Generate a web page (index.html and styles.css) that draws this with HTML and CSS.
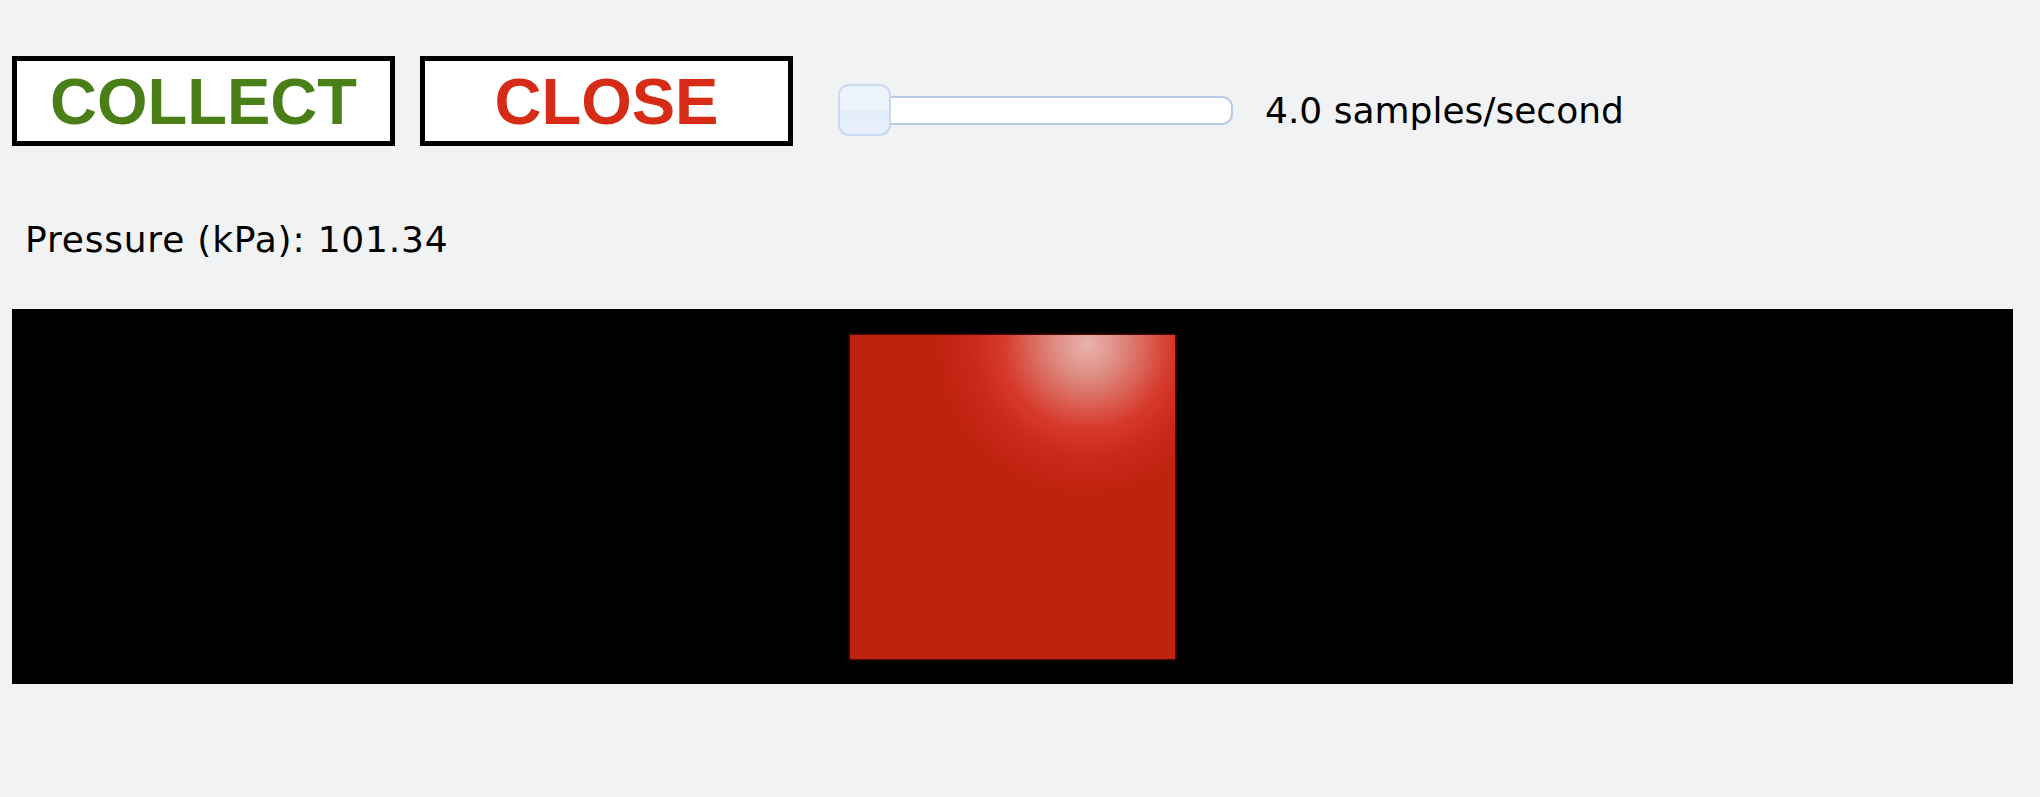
FILE: index.html
```html
<!DOCTYPE html>
<html>
<head>
<meta charset="utf-8">
<title>Pressure sensor</title>
<link rel="stylesheet" href="styles.css">
</head>
<body>
<div class="page">
  <div class="controls">
    <button class="btn btn-collect">COLLECT</button>
    <button class="btn btn-close">CLOSE</button>
    <input class="rate" type="range" min="4" max="100" value="4">
    <span class="rate-label">4.0 samples/second</span>
  </div>
  <div class="reading">Pressure (kPa): 101.34</div>
  <div class="stage">
    <div class="indicator"></div>
  </div>
</div>
</body>
</html>
```

FILE: styles.css
```css
html, body {
  margin: 0;
  padding: 0;
  background: #f1f2f4;
}

.page {
  padding: 56px 0 0 12px;
  font-family: "DejaVu Sans", Verdana, sans-serif;
  color: #000;
}

.controls {
  display: flex;
  align-items: center;
  height: 90px;
}

.btn {
  box-sizing: border-box;
  height: 90px;
  margin: 0;
  padding: 0;
  background: #fff;
  border: 5px solid #000;
  border-radius: 0;
  font-family: "Liberation Sans", Arial, sans-serif;
  font-weight: bold;
  font-size: 65px;
  line-height: 1;
  display: flex;
  align-items: center;
  justify-content: center;
}

.btn-collect {
  width: 383px;
  color: #4a7e17;
}

.btn-close {
  width: 373px;
  margin-left: 25px;
  color: #d62b16;
}

.rate {
  -webkit-appearance: none;
  appearance: none;
  width: 395px;
  height: 52px;
  margin: 18px 0 0 45px;
  padding: 0;
  background: transparent;
}

.rate::-webkit-slider-runnable-track {
  box-sizing: border-box;
  height: 29px;
  background: #fff;
  border: 2px solid #b9cbe5;
  border-radius: 11px;
}

.rate::-webkit-slider-thumb {
  -webkit-appearance: none;
  box-sizing: border-box;
  width: 53px;
  height: 52px;
  margin-top: -13.5px;
  margin-left: -2px;
  border: 2px solid #c9d9ee;
  border-radius: 11px;
  background: linear-gradient(to bottom, #eef4fd 0%, #eef4fd 50%, #e3edfa 52%, #e7f0fc 100%);
}

.rate-label {
  margin: 20px 0 0 32px;
  font-size: 36px;
  line-height: 1;
}

.reading {
  margin: 74px 0 0 13px;
  font-size: 36px;
  letter-spacing: 0.8px;
  line-height: 40px;
}

.stage {
  margin-top: 49px;
  width: 2001px;
  height: 375px;
  background: #000;
  display: flex;
  align-items: center;
  justify-content: center;
}

.indicator {
  width: 325px;
  height: 324px;
  background: radial-gradient(circle at 73% 3%, #e8b4ae 0px, #df8f86 30px, #d6392a 85px, #c9281a 115px, #bf220f 150px, #bf220f 100%);
  box-shadow: 0 0 2px 1px rgba(110, 20, 10, 0.85);
}
```
